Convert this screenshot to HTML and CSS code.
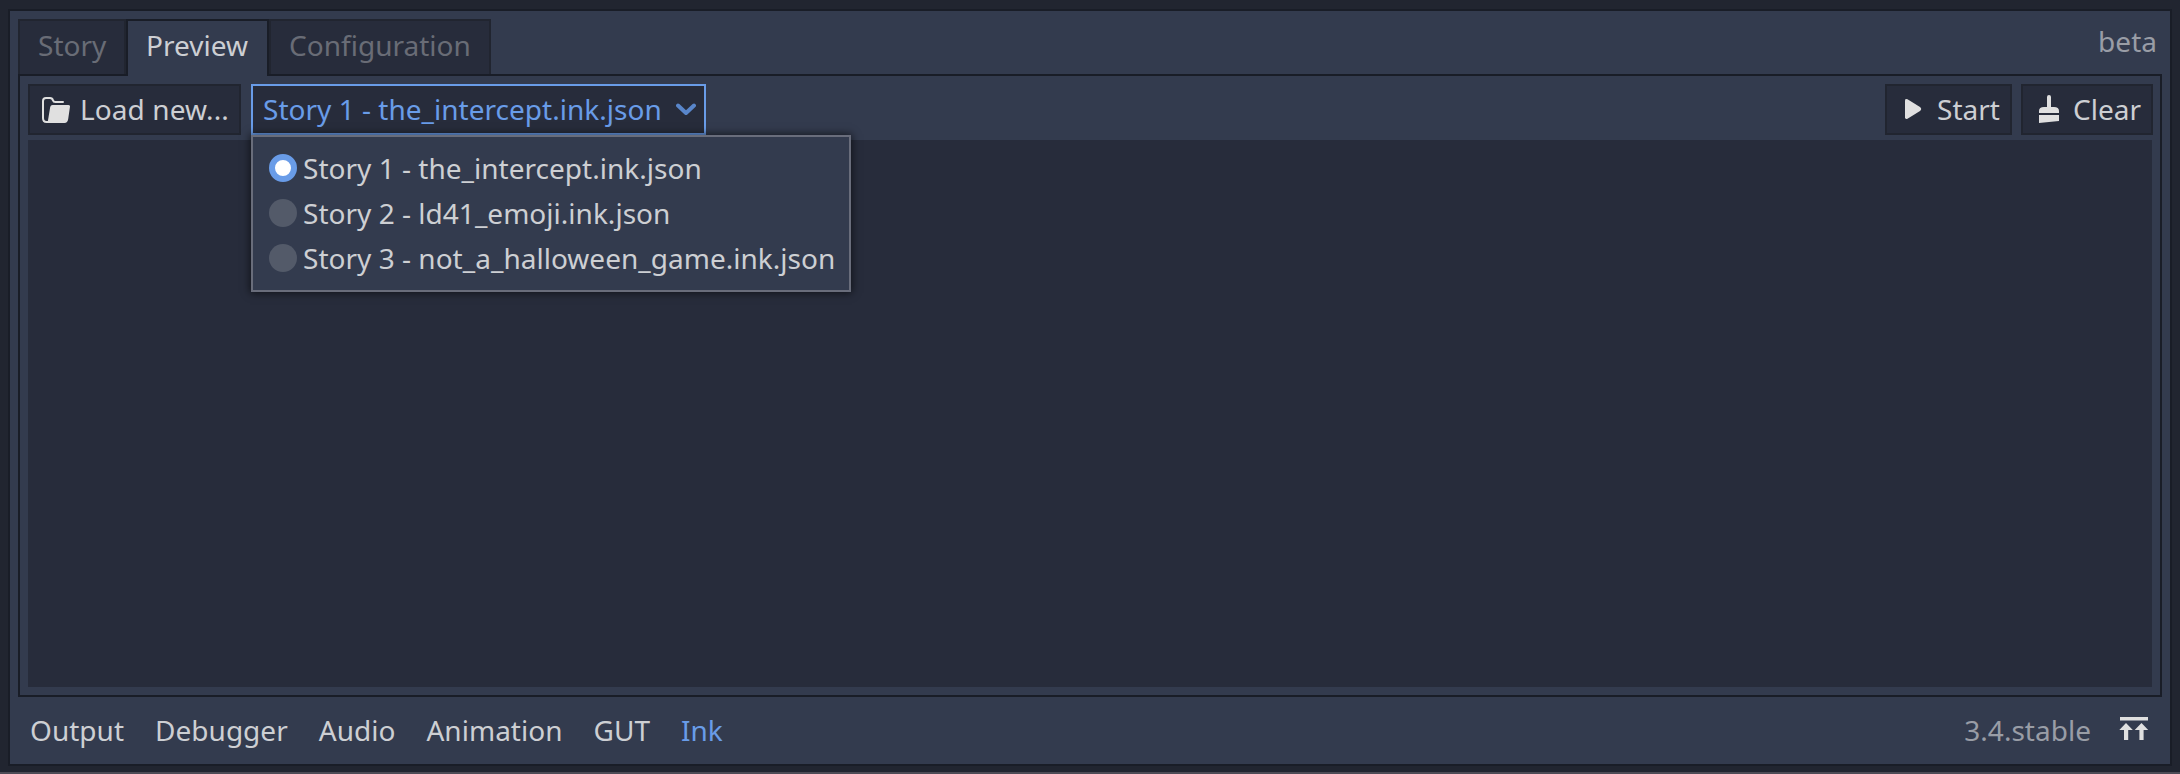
FILE: index.html
```html
<!DOCTYPE html>
<html lang="en">
<head>
<meta charset="utf-8">
<title>Ink</title>
<link rel="stylesheet" href="styles.css">
</head>
<body>
<main class="dock">
  <header class="tabbar">
    <div class="tab tab-story">Story</div>
    <div class="tab tab-active">Preview</div>
    <div class="tab tab-config">Configuration</div>
    <span class="beta">beta</span>
  </header>
  <section class="content">
    <div class="toolbar">
      <button class="btn load">
        <svg class="icon" width="28" height="28" viewBox="0 0 28 28"><path d="M21 7H13.200Q11.500 7 11 5.400Q10.400 3 8 3H4Q1 3 1 6V23Q1 27 4.500 27H8" fill="none" stroke="#e0e0e0" stroke-width="2" stroke-linecap="round"/><path d="M10.500 10H26.500Q28.300 10 28 11.500L26.200 24Q25.600 28 22.500 28H7Q5.500 28 5.900 26L8.200 12Q8.600 10 10.500 10Z" fill="#e0e0e0"/></svg>
        <span>Load new...</span>
      </button>
      <div class="picker">
        <button class="btn option"><span>Story 1 - the_intercept.ink.json</span>
          <svg class="chevron" width="20" height="14" viewBox="0 0 20 14"><path d="M2 3.500L10 11L18 3.500" fill="none" stroke="#5986ca" stroke-width="4" stroke-linecap="round" stroke-linejoin="round"/></svg>
        </button>
        <div class="menu">
          <div class="item"><i class="radio checked"></i><span>Story 1 - the_intercept.ink.json</span></div>
          <div class="item"><i class="radio"></i><span>Story 2 - ld41_emoji.ink.json</span></div>
          <div class="item"><i class="radio"></i><span>Story 3 - not_a_halloween_game.ink.json</span></div>
        </div>
      </div>
      <button class="btn start">
        <svg class="icon" width="28" height="28" viewBox="0 0 28 28"><path d="M6 5.500Q6 3.500 8.500 4.200L21 12Q23.400 14 21 16L8.500 23.800Q6 24.500 6 22.500Z" fill="#e0e0e0"/></svg>
        <span>Start</span>
      </button>
      <button class="btn clear">
        <svg class="icon" width="28" height="28" viewBox="0 0 28 28"><path d="M12 12V2Q12 0 14 0T16 2V12H19Q24 12 24 16V18H4V16Q4 12 9 12ZM4 20H24V26L4 28Z" fill="#e0e0e0"/></svg>
        <span>Clear</span>
      </button>
    </div>
    <div class="viewport"></div>
  </section>
  <footer class="bottom">
    <nav class="panels"><span>Output</span><span>Debugger</span><span>Audio</span><span>Animation</span><span>GUT</span><span class="current">Ink</span></nav>
    <span class="version">3.4.stable</span>
    <svg class="expand" width="30" height="26" viewBox="0 0 30 26"><path d="M1 1H29V4.500H1ZM7 7L13.800 14H9.200V24H5V14H0.300ZM22.500 7L29.200 14H24.600V24H20.400V14H15.700Z" fill="#e0e0e0"/></svg>
  </footer>
</main>
</body>
</html>
```
FILE: styles.css
```css
* { box-sizing: border-box; }
body {
  margin: 0;
  height: 774px;
  padding: 9px 8px 6px;
  overflow: hidden;
  background: #212530;
  border-bottom: 2px solid #4d4b56;
  font: 28px/38px "Noto Sans", sans-serif;
  letter-spacing: .02px;
  color: #cdcfd3;
  white-space: nowrap;
}
.dock {
  height: 757px;
  border: 2px solid #191d27;
  background: #333b4e;
  padding: 8px;
  display: flex;
  flex-direction: column;
}
.tabbar { display: flex; height: 57px; margin-bottom: -2px; position: relative; }
.tab {
  height: 55px;
  padding: 5px 0 0 18px;
  background: #272c3b;
  border: 2px solid #212530;
  border-bottom: 0;
  color: #696c76;
}
.tab-story { width: 108px; }
.tab-active {
  width: 143px;
  height: 57px;
  background: #333b4e;
  border-color: #191d27;
  color: #cdcfd3;
}
.tab-config { width: 222px; }
.beta { margin: 3px 5px 0 auto; color: #999da6; }
.content {
  height: 623px;
  border: 2px solid #191d27;
  padding: 8px;
}
.toolbar { display: flex; height: 51px; margin-bottom: 5px; }
.btn {
  height: 51px;
  padding: 0 0 1px 12px;
  display: flex;
  align-items: center;
  border: 2px solid #212530;
  background: #272c3b;
  font: inherit;
  letter-spacing: inherit;
  color: inherit;
}
.icon { flex: none; overflow: visible; margin-right: 10px; }
.load { width: 213px; margin-right: 10px; }
.load span { letter-spacing: .1px; }
.picker { position: relative; }
.option {
  width: 455px;
  padding: 0 8px 1px 10px;
  justify-content: space-between;
  border-color: #699ce8;
  color: #699ce8;
}
.start { width: 127px; margin-left: auto; margin-right: 9px; }
.clear { width: 132px; margin-right: -1px; }
.menu {
  position: absolute;
  left: 0;
  top: 51px;
  z-index: 2;
  width: 600px;
  height: 157px;
  padding: 9px 0 9px 16px;
  border: 2px solid #696d7b;
  background: #333b4e;
  box-shadow: 0 0 8px 1px rgba(0, 0, 0, .6);
}
.item { display: flex; align-items: center; height: 45px; padding-bottom: 1px; gap: 6px; }
.radio { flex: none; width: 28px; height: 28px; border-radius: 50%; background: #535a69; }
.checked { background: #fff; border: 6px solid #699ce8; }
.viewport { height: 547px; background: #272c3b; }
.bottom { display: flex; padding: 14px 13px 0 12px; }
.panels { display: flex; gap: 31px; }
.current { color: #699ce8; }
.version { margin: 0 28px 0 auto; color: #999da6; }
.expand { margin-top: 5px; }
```
